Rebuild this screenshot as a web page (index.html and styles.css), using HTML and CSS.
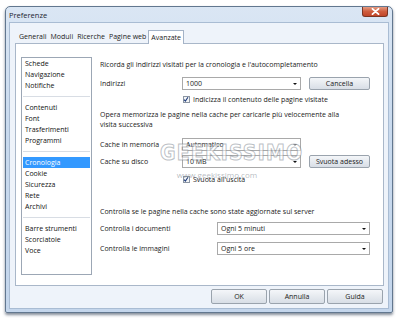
FILE: index.html
```html
<!DOCTYPE html>
<html lang="it">
<head>
    <meta charset="UTF-8">
    <title>Preferenze</title>
    <link rel="stylesheet" href="styles.css">
</head>
<body>
    <div class="window">
        <div class="titlebar">
            <span class="title">Preferenze</span>
            <div class="close-btn">
                <svg width="9" height="7" viewBox="0 0 9 7"><path d="M1.5 0.8 L7.5 6.2 M7.5 0.8 L1.5 6.2" stroke="#fff" stroke-width="1.8" stroke-linecap="round"/></svg>
            </div>
        </div>

        <div class="client">
            <div class="tabs">
                <span class="tab">Generali</span>
                <span class="tab">Moduli</span>
                <span class="tab">Ricerche</span>
                <span class="tab">Pagine web</span>
                <span class="tab active">Avanzate</span>
            </div>

            <div class="panel">
                <ul class="nav-list">
                    <li>Schede</li>
                    <li>Navigazione</li>
                    <li>Notifiche</li>
                    <li class="sep"></li>
                    <li>Contenuti</li>
                    <li>Font</li>
                    <li>Trasferimenti</li>
                    <li>Programmi</li>
                    <li class="sep"></li>
                    <li class="selected">Cronologia</li>
                    <li>Cookie</li>
                    <li>Sicurezza</li>
                    <li>Rete</li>
                    <li>Archivi</li>
                    <li class="sep"></li>
                    <li>Barre strumenti</li>
                    <li>Scorciatoie</li>
                    <li>Voce</li>
                </ul>

                <div class="settings">
                    <p class="text p1">Ricorda gli indirizzi visitati per la cronologia e l'autocompletamento</p>

                    <div class="row r1">
                        <span class="label">Indirizzi</span>
                        <div class="combo"><span>1000</span><i class="arrow"></i></div>
                        <button class="btn">Cancella</button>
                    </div>

                    <label class="check c1"><span class="box"><svg width="7" height="7" viewBox="0 0 7 7"><path d="M1.2 3.6 L2.8 5.4 L5.8 0.8" fill="none" stroke="#1d3a7a" stroke-width="1.2"/></svg></span>Indicizza il contenuto delle pagine visitate</label>

                    <p class="text p2">Opera memorizza le pagine nella cache per caricarle più velocemente alla<br>visita successiva</p>

                    <div class="row r2">
                        <span class="label">Cache in memoria</span>
                        <div class="combo"><span>Automatico</span><i class="arrow"></i></div>
                    </div>

                    <div class="row r3">
                        <span class="label">Cache su disco</span>
                        <div class="combo"><span>10 MB</span><i class="arrow"></i></div>
                        <button class="btn">Svuota adesso</button>
                    </div>

                    <label class="check c2"><span class="box"><svg width="7" height="7" viewBox="0 0 7 7"><path d="M1.2 3.6 L2.8 5.4 L5.8 0.8" fill="none" stroke="#1d3a7a" stroke-width="1.2"/></svg></span>Svuota all'uscita</label>

                    <p class="text p3">Controlla se le pagine nella cache sono state aggiornate sul server</p>

                    <div class="row r4">
                        <span class="label wide">Controlla i documenti</span>
                        <div class="combo long"><span>Ogni 5 minuti</span><i class="arrow"></i></div>
                    </div>

                    <div class="row r5">
                        <span class="label wide">Controlla le immagini</span>
                        <div class="combo long"><span>Ogni 5 ore</span><i class="arrow"></i></div>
                    </div>
                </div>
            </div>

            <div class="footer">
                <button class="btn footer-btn">OK</button>
                <button class="btn footer-btn">Annulla</button>
                <button class="btn footer-btn">Guida</button>
            </div>
        </div>

        <div class="watermark">
            <div class="wm-big">GEEKISSIMO</div>
            <div class="wm-url">www.geekissimo.com</div>
        </div>
    </div>
</body>
</html>
```

FILE: styles.css
```css
* {
    margin: 0;
    padding: 0;
    box-sizing: border-box;
}

body {
    width: 400px;
    height: 321px;
    background: #fff;
    font-family: 'Open Sans', 'Noto Sans', sans-serif;
    font-size: 7px;
    color: #1a1a1a;
    overflow: hidden;
}

.window {
    position: relative;
    margin: 6px 0 0 5px;
    width: 388px;
    height: 307px;
    border: 1px solid #62778f;
    border-radius: 5px 5px 2px 2px;
    background: linear-gradient(#dae6f4, #c9daee 40%, #c4d6ec);
    padding: 0 3px 3px 3px;
    display: flex;
    flex-direction: column;
    box-shadow: 0 2px 3px rgba(30, 45, 70, 0.55);
}

.titlebar {
    height: 15px;
    display: flex;
    align-items: center;
    justify-content: space-between;
}

.title {
    padding-left: 0;
    font-size: 7.5px;
    color: #1b2430;
}

.close-btn {
    align-self: flex-start;
    width: 26px;
    height: 10px;
    margin-right: 1px;
    border: 1px solid #7a3523;
    border-top: none;
    border-radius: 0 0 3px 3px;
    background: linear-gradient(#e49b82, #cf5d3e 50%, #c1462a);
    display: flex;
    justify-content: center;
    align-items: center;
}

.client {
    flex: 1;
    background: #eef3fa;
    border: 1px solid #a9bcd3;
    display: flex;
    flex-direction: column;
}

/* onglets */
.tabs {
    display: flex;
    margin: 7px 0 0 7px;
    height: 13px;
    align-items: flex-end;
}

.tab {
    height: 12px;
    line-height: 12px;
    padding: 0 2px;
    color: #1a1a1a;
}

.tab.active {
    height: 14px;
    margin-bottom: -1px;
    line-height: 13px;
    background: #fff;
    border: 1px solid #a4b3c7;
    border-bottom: none;
    position: relative;
    z-index: 1;
}

.panel {
    height: 243px;
    margin: 0 4px 0 5px;
    background: #fff;
    border: 1px solid #a9b7c9;
    display: flex;
    padding: 13px 13px 10px 5px;
}

/* liste de gauche */
.nav-list {
    list-style: none;
    width: 71px;
    height: 218px;
    border: 1px solid #9ca7b5;
    padding: 0 1px;
    color: #111;
}

.nav-list li {
    height: 11px;
    line-height: 11px;
    padding-left: 2px;
}

.nav-list li.sep {
    height: 1px;
    margin: 5px 0;
    background: #d8dde4;
}

.nav-list li.selected {
    background: #3399ff;
    color: #fff;
}

/* colonne des réglages */
.settings {
    margin-left: 8px;
    width: 270px;
    display: flex;
    flex-direction: column;
}

.text {
    line-height: 10px;
}

.p1 { margin-top: 2px; line-height: 11px; }
.p2 { margin-top: 5px; }
.p3 { margin-top: 21px; line-height: 11px; }

.row {
    display: flex;
    align-items: center;
    height: 13px;
}

.r1 { margin-top: 7px; }
.r2 { margin-top: 8px; }
.r3 { margin-top: 4px; }
.r4 { margin-top: 5px; }
.r5 { margin-top: 7px; }

.label {
    width: 82px;
}

.label.wide {
    width: 117px;
}

.combo {
    width: 119px;
    height: 13px;
    border: 1px solid #a9a9a9;
    background: #fff;
    display: flex;
    align-items: center;
    padding-left: 3px;
}

.combo span {
    flex: 1;
}

.combo.long {
    width: 153px;
}

.arrow {
    width: 0;
    height: 0;
    margin-right: 3px;
    border-left: 2px solid transparent;
    border-right: 2px solid transparent;
    border-top: 2px solid #111;
}

.btn {
    font-family: inherit;
    font-size: 7px;
    color: #1a1a1a;
    height: 13px;
    border: 1px solid #9aa3ad;
    border-radius: 2px;
    background: linear-gradient(#f4f6f9, #e6eaef 50%, #d8dee6);
}

.row .btn {
    width: 61px;
    margin-left: 8px;
}

.check {
    display: flex;
    align-items: center;
    height: 11px;
    padding-left: 83px;
}

.c1 { margin-top: 4px; }
.c2 { margin-top: 6px; }

.box {
    width: 7px;
    height: 7px;
    border: 1px solid #8c96a3;
    background: #f4f6f8;
    margin-right: 3px;
    display: flex;
}

.box svg {
    margin: -1px 0 0 -1px;
}

/* boutons du bas */
.footer {
    display: flex;
    justify-content: flex-end;
    gap: 2px;
    margin-top: 3px;
    padding-right: 5px;
}

.footer-btn {
    width: 56px;
    height: 15px;
}

/* filigrane */
.watermark {
    position: absolute;
    left: 154px;
    top: 136px;
    width: 114px;
    pointer-events: none;
    text-align: center;
}

.wm-big {
    font-family: 'DejaVu Sans Condensed', 'DejaVu Sans', sans-serif;
    font-weight: bold;
    font-size: 21px;
    letter-spacing: 1.2px;
    color: rgba(255, 255, 255, 0.55);
    -webkit-text-stroke: 1px rgba(120, 130, 140, 0.5);
    line-height: 21px;
}

.wm-url {
    font-size: 8px;
    line-height: 9px;
    color: rgba(120, 128, 138, 0.55);
    margin-top: 6px;
}
```
